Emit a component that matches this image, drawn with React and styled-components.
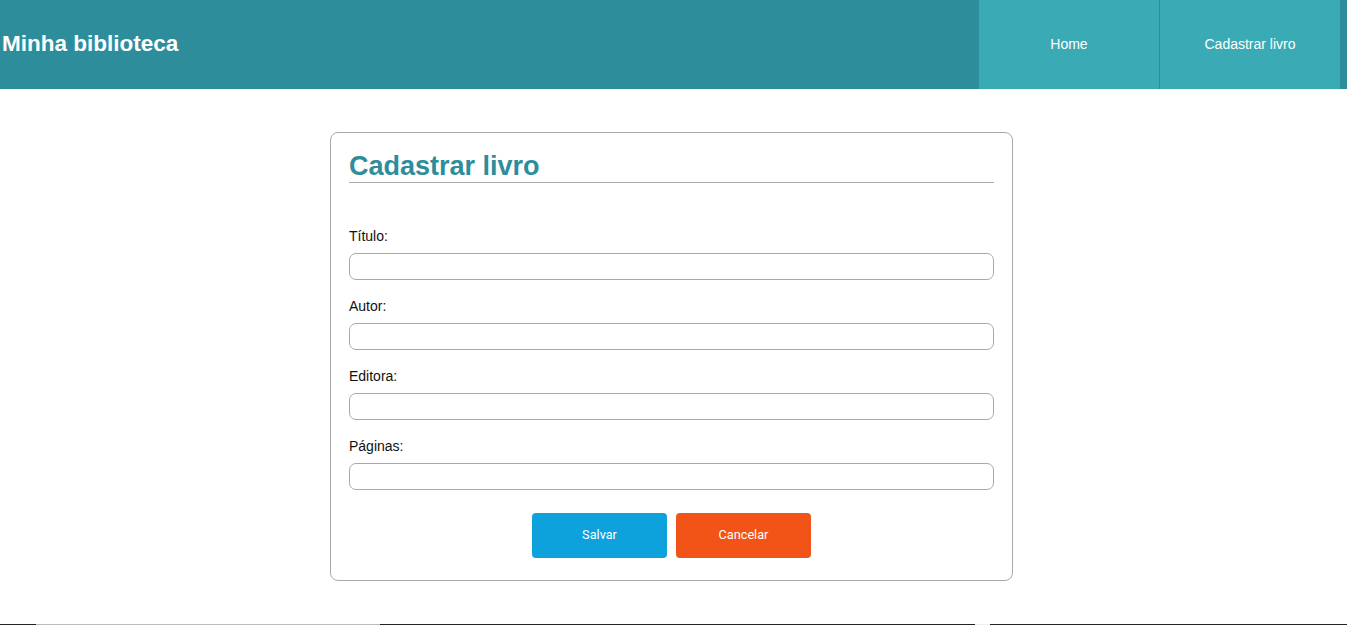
import React from 'react'
import styled, { createGlobalStyle } from "styled-components";

const GlobalStyle = createGlobalStyle`
  body {
    margin: 0;
    font-family: "Liberation Sans", Arial, sans-serif;
    background: #fff;
  }
`

const fields = ['Título:', 'Autor:', 'Editora:', 'Páginas:'];

export const App = () => {
  return (
    <>
      <GlobalStyle />
      <Header>
        <Brand>Minha biblioteca</Brand>
        <Nav>
          <NavItem>Home</NavItem>
          <NavItem>Cadastrar livro</NavItem>
        </Nav>
      </Header>
      <Main>
        <Card>
          <Title>Cadastrar livro</Title>
          <Form>
            {fields.map((f) => (
              <Field key={f}>
                <Label>{f}</Label>
                <Input type="text" />
              </Field>
            ))}
            <Actions>
              <Button type="button" color="#0ea2dc">Salvar</Button>
              <Button type="button" color="#f15416">Cancelar</Button>
            </Actions>
          </Form>
        </Card>
      </Main>
      <Footer />
    </>
  )
}

const Header = styled.header`
  height: 89px;
  background: #2e8d9b;
  display: flex;
  align-items: center;
  justify-content: space-between;
  padding-left: 2px;
  padding-right: 7px;
`
const Brand = styled.h1`
  margin: 0 0 2px;
  color: #fff;
  font-size: 22.5px;
  font-weight: bold;
`
const Nav = styled.nav`
  display: flex;
  height: 100%;
`
const NavItem = styled.a`
  width: 180px;
  display: flex;
  align-items: center;
  justify-content: center;
  padding-bottom: 2px;
  background: #3aaab5;
  color: #fff;
  font-size: 14px;
  & + & {
    border-left: 1px solid #2e8d9b;
  }
`
const Main = styled.main`
  display: flex;
  justify-content: center;
  padding: 43px 4px 43px 0;
`
const Card = styled.section`
  width: 645px;
  border: 1px solid #aaa;
  border-radius: 8px;
  padding: 18px 18px 22px;
`
const Title = styled.h2`
  margin: 0;
  color: #2e8d9b;
  font-size: 27px;
  line-height: 31px;
  border-bottom: 1px solid #aaa;
`
const Form = styled.form`
  padding-top: 45px;
`
const Field = styled.div`
  display: flex;
  flex-direction: column;
  margin-bottom: 18px;
`
const Label = styled.label`
  font-size: 14px;
  line-height: 16px;
  color: #111;
  margin-bottom: 9px;
`
const Input = styled.input`
  height: 27px;
  box-sizing: border-box;
  border: 1px solid #aaa;
  border-radius: 7px;
  padding: 0 8px;
  font-size: 14px;
  outline: none;
`
const Actions = styled.div`
  display: flex;
  justify-content: center;
  gap: 9px;
  padding-top: 5px;
`
const Button = styled.button`
  width: 135px;
  height: 45px;
  border: none;
  border-radius: 4px;
  background: ${(p) => p.color};
  color: #fff;
  font-family: Roboto, sans-serif;
  font-size: 12.7px;
  padding: 0 0 2px;
`
const Footer = styled.footer`
  height: 60px;
  background: linear-gradient(to right, #222 0 36px, #bbb 36px 380px, #222 380px 975px, #eee 975px 990px, #222 990px);
`
export default App;
